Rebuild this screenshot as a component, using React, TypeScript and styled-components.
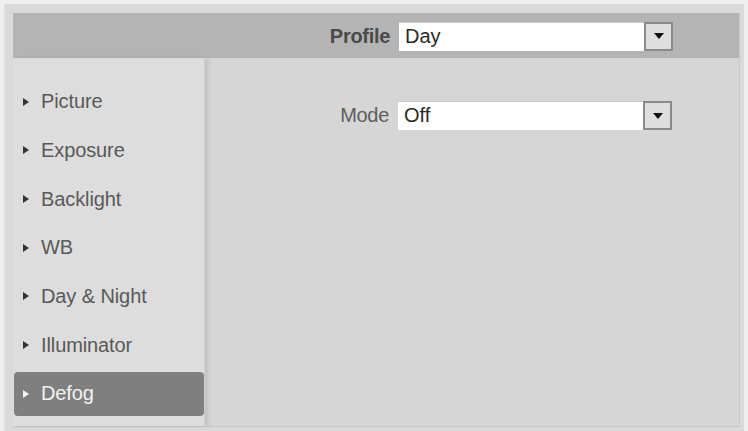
import React from 'react';
import styled, { createGlobalStyle } from 'styled-components';

const GlobalStyle = createGlobalStyle`
  html, body {
    margin: 0;
    padding: 0;
    background: #efefef;
    font-family: 'Liberation Sans', Arial, sans-serif;
  }
`;

const menu = ['Picture', 'Exposure', 'Backlight', 'WB', 'Day & Night', 'Illuminator', 'Defog'];

export default function App() {
  return (
    <>
      <GlobalStyle />
      <Frame>
        <Panel>
          <Header>
            <Row>
              <Label strong>Profile</Label>
              <Select value="Day" />
            </Row>
          </Header>
          <Body>
            <Sidebar>
              {menu.map((m) => (
                <Item key={m} active={m === 'Defog'}>
                  <Arrow active={m === 'Defog'} />
                  {m}
                </Item>
              ))}
            </Sidebar>
            <Content>
              <Row>
                <Label>Mode</Label>
                <Select value="Off" />
              </Row>
            </Content>
          </Body>
        </Panel>
      </Frame>
    </>
  );
}

function Select({ value }: { value: string }) {
  return (
    <SelectBox>
      <SelectValue>{value}</SelectValue>
      <SelectButton>
        <Caret />
      </SelectButton>
    </SelectBox>
  );
}

const Frame = styled.div`
  margin: 4px 4px 0 4px;
  height: 427px;
  background: #dadada;
  padding: 9px 4px 5px 8px;
  box-sizing: border-box;
  border-left: 1px solid #e4e4e4;
`;

const Panel = styled.div`
  height: 100%;
  display: flex;
  flex-direction: column;
  background: #d6d6d6;
  border-right: 1px solid #c9c9c9;
  border-bottom: 1px solid #c9c9c9;
`;

const Header = styled.div`
  height: 45px;
  flex: none;
  background: #b4b4b4;
  display: flex;
  align-items: center;
  padding-left: 257px;
  padding-top: 1px;
  box-sizing: border-box;
`;

const Row = styled.div`
  display: flex;
  align-items: center;
  gap: 9px;
`;

const Label = styled.span<{ strong?: boolean }>`
  width: 120px;
  text-align: right;
  font-size: 20px;
  letter-spacing: -0.3px;
  color: ${(p) => (p.strong ? '#4a4a4a' : '#5e5e5e')};
  font-weight: ${(p) => (p.strong ? 'bold' : 'normal')};
`;

const SelectBox = styled.div`
  width: 274px;
  height: 29px;
  display: flex;
  background: #fff;
  border-top: 1px solid #c8c8c8;
  box-sizing: border-box;
`;

const SelectValue = styled.div`
  flex: 1;
  padding-left: 6px;
  font-size: 20px;
  line-height: 27px;
  color: #2a2a2a;
`;

const SelectButton = styled.div`
  width: 29px;
  margin-top: -1px;
  height: 29px;
  box-sizing: border-box;
  border: 2px solid #8a8a8a;
  background: #dedede;
  display: flex;
  align-items: center;
  justify-content: center;
`;

const Caret = styled.span`
  width: 0;
  height: 0;
  border-left: 5px solid transparent;
  border-right: 5px solid transparent;
  border-top: 6px solid #111;
`;

const Body = styled.div`
  flex: 1;
  display: flex;
`;

const Sidebar = styled.div`
  width: 191px;
  flex: none;
  background: #dddddd;
  padding-top: 22px;
  display: flex;
  flex-direction: column;
  gap: 5px;
  box-shadow: 3px 0 4px rgba(0, 0, 0, 0.1);
  border-right: 1px solid #d0d0d0;
  position: relative;
`;

const Item = styled.div<{ active?: boolean }>`
  height: 43.67px;
  margin-left: 1px;
  display: flex;
  align-items: center;
  padding-left: 9px;
  gap: 12px;
  font-size: 20px;
  letter-spacing: -0.1px;
  border-radius: 4px;
  color: ${(p) => (p.active ? '#f2f2f2' : '#595959')};
  background: ${(p) => (p.active ? '#7f7f7f' : 'transparent')};
`;

const Arrow = styled.span<{ active?: boolean }>`
  width: 0;
  height: 0;
  border-top: 4.5px solid transparent;
  border-bottom: 4.5px solid transparent;
  border-left: 6px solid ${(p) => (p.active ? '#f4f4f4' : '#333')};
`;

const Content = styled.div`
  flex: 1;
  padding-left: 64px;
  padding-top: 43px;
`;
